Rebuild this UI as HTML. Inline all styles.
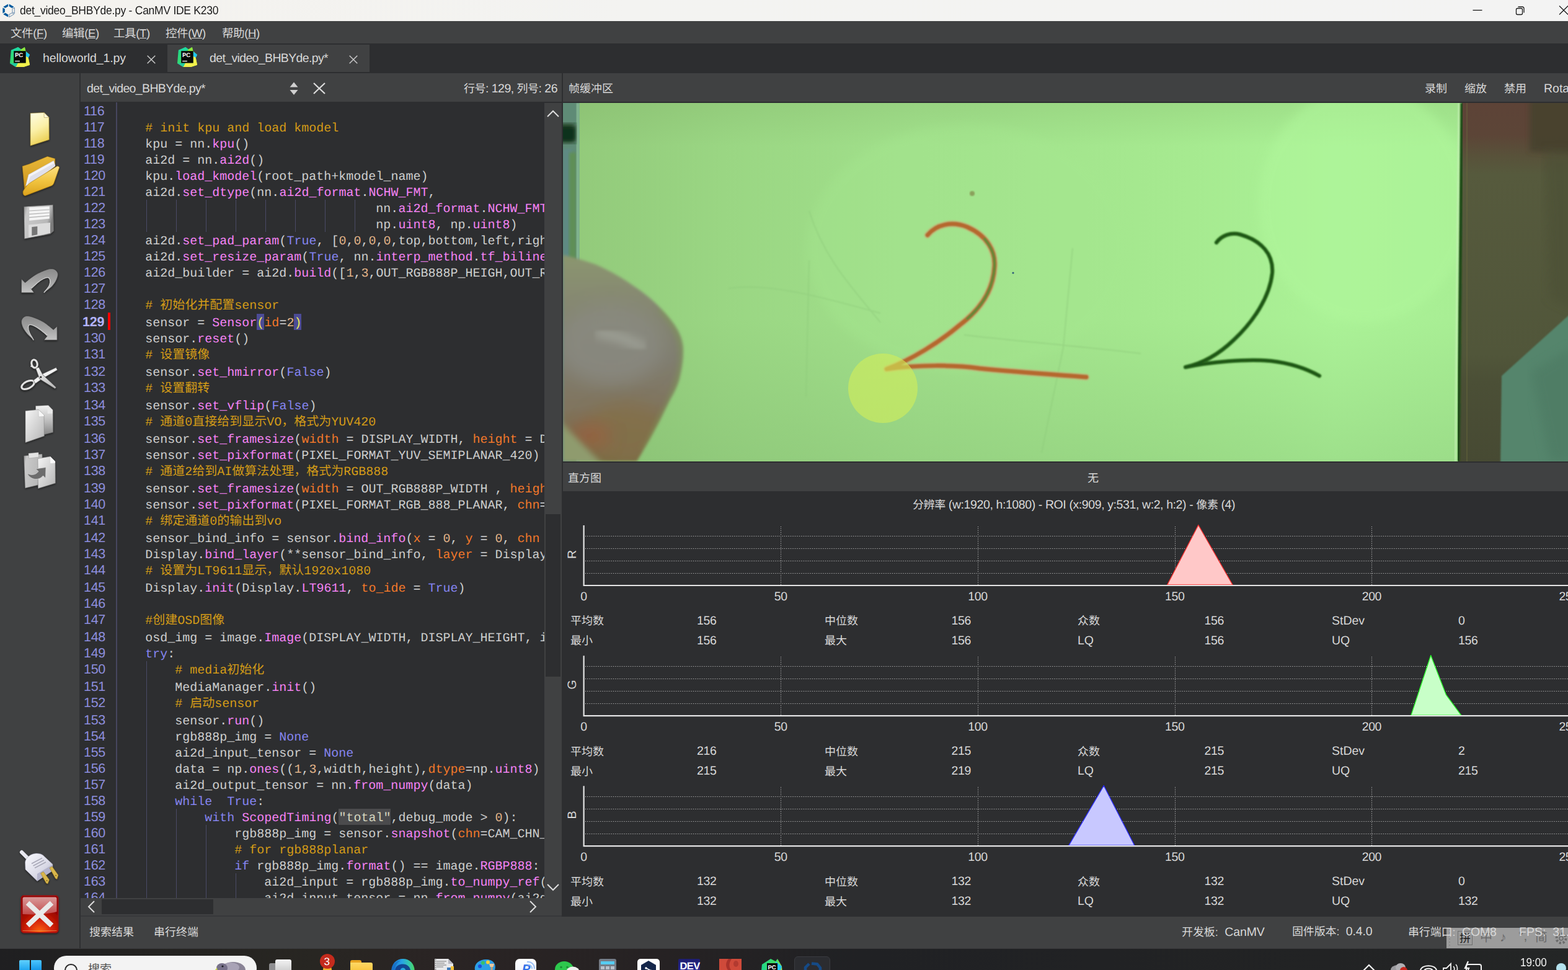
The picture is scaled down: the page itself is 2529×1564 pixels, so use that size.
<!DOCTYPE html>
<html lang="zh-CN"><head><meta charset="utf-8"><title>det_video_BHBYde.py - CanMV IDE K230</title>
<style>
html,body{margin:0;padding:0;}
body{text-rendering:geometricPrecision;width:2529px;height:1564px;overflow:hidden;position:relative;background:#2d2e30;font-family:"Liberation Sans","Noto Sans CJK SC",sans-serif;color:#d6d6d6;}
.a{position:absolute;}
.t{position:absolute;white-space:pre;line-height:1;}
.u{font-size:19.5px;color:#d8d8d8;}
.z{font-size:18px;}
svg{position:absolute;overflow:visible;}
/* code */
#code{position:absolute;left:129px;top:165px;width:749px;height:1283px;overflow:hidden;background:#2d2e30;}
.ln{position:absolute;left:0;width:749px;white-space:pre;font-family:"Liberation Mono","Noto Sans CJK SC",monospace;font-size:20px;color:#cecece;}
.ln i{font-style:normal;position:absolute;left:6px;top:0px;font-family:"Liberation Sans",sans-serif;font-size:21.5px;color:#8e8ede;letter-spacing:-0.3px;line-height:26px;}
.ln b{font-weight:normal;position:absolute;left:57.3px;top:2.8px;line-height:26px;}
.ph{display:inline-block;height:26px;margin-top:-3px;padding-top:3px;box-sizing:border-box;vertical-align:top;background:#4c4c96;color:#eeee55;}
.c{color:#d39b17;}
.m{color:#f583f5;}
.k{color:#8585f0;}
.g{color:#f2782a;}
.n{color:#e3b58a;}
.s{display:inline-block;height:26px;margin-top:-3px;padding-top:3px;box-sizing:border-box;vertical-align:top;color:#d6d6c0;background:#4b4b4d;}
.gd{position:absolute;width:1px;background:#4a4a66;}
</style></head><body>

<!-- title bar -->
<div class="a" style="left:0;top:0;width:2529px;height:34px;background:linear-gradient(90deg,#f4f2ee 0%,#f3f3f1 40%,#f3f3f3 100%)"></div>
<svg style="left:0;top:0" width="30" height="34" viewBox="0 0 30 34"><path d="M14.76 6.39 L22.57 10.90 L19.25 12.99 L14.61 10.31 Z M13.04 27.40 L5.23 22.89 L8.55 20.81 L13.19 23.49 Z M4.37 21.41 L4.37 12.39 L7.84 14.22 L7.84 19.58 Z M5.23 10.90 L13.04 6.39 L13.19 10.31 L8.55 12.99 Z" fill="#005a9e"/><path d="M23.43 12.39 L23.43 21.41 L19.96 19.58 L19.96 14.22 Z M22.57 22.89 L14.76 27.40 L14.61 23.49 L19.25 20.81 Z" fill="none" stroke="#7d9bb8" stroke-width="1.1" stroke-linejoin="round"/></svg>
<div class="t" id="ttl" style="left:32px;top:8px;font-size:19px;color:#1a1a1a;letter-spacing:-0.3px;transform-origin:0 0;transform:scaleX(0.922)">det_video_BHBYde.py - CanMV IDE K230</div>
<svg style="left:2375px;top:8px" width="154" height="20" viewBox="0 0 154 20"><g fill="none" stroke="#1b1b1b" stroke-width="1.3"><path d="M0.5 8.5 H15.5"/><rect x="70.5" y="5.5" width="10" height="10" rx="2"/><path d="M73.5 3 H80 a3 3 0 0 1 3 3 V12.5"/><path d="M140 1.5 L154 15.5 M154 1.5 L140 15.5"/></g></svg>

<!-- menu bar -->
<div class="a" style="left:0;top:34px;width:2529px;height:36px;background:#404142"></div>
<div class="t u" style="left:17px;top:44.5px;font-size:18.5px;letter-spacing:-0.4px">文件(<u>F</u>)</div>
<div class="t u" style="left:100px;top:44.5px;font-size:18.5px;letter-spacing:-0.4px">编辑(<u>E</u>)</div>
<div class="t u" style="left:183px;top:44.5px;font-size:18.5px;letter-spacing:-0.4px">工具(<u>T</u>)</div>
<div class="t u" style="left:267px;top:44.5px;font-size:18.5px;letter-spacing:-0.4px">控件(<u>W</u>)</div>
<div class="t u" style="left:358px;top:44.5px;font-size:18.5px;letter-spacing:-0.4px">帮助(<u>H</u>)</div>

<!-- tab bar -->
<div class="a" style="left:0;top:70px;width:2529px;height:48px;background:#2d2e30"></div>
<div class="a" style="left:270px;top:72px;width:326px;height:44px;background:#404142"></div>
<svg id="pc1" style="left:16px;top:76px" width="33" height="33" viewBox="0 0 33 33"><defs><linearGradient id="pcg" x1="0" y1="0.2" x2="1" y2="0.8"><stop offset="0" stop-color="#1fd78d"/><stop offset="0.45" stop-color="#3fdb62"/><stop offset="1" stop-color="#c8ee45"/></linearGradient></defs><path d="M1.8 5 L13.2 0 L18 3.4 L23.9 0 L25.5 6.4 L32.1 12.2 L29.7 17 L32.1 28.7 L22 32.1 L9.5 31.9 L0 26 Z" fill="url(#pcg)"/><path d="M13.2 0 L18 3.4 L10 8 L1.8 5 Z" fill="#1fd9a0"/><path d="M18 3.4 L23.9 0 L25.5 6.4 L25.7 12 L16 8 Z" fill="#8fe63c"/><path d="M25.5 7 L32.1 12.2 L29.7 17 L25.7 21 Z" fill="#1fc5f2"/><path d="M25.7 14.5 L29.7 17 L32.1 28.7 L22 32.1 L9.5 31.9 L13 25 L25.7 25.6 Z" fill="#f1f04b"/><path d="M9.5 31.9 L13 25.6 L6.2 25.6 L0 26 Z" fill="#22c9a0"/><rect x="6.2" y="6.2" width="19.5" height="19.4" fill="#080a06"/><path d="M8.2 22.6 H15.9" stroke="#d8d8d8" stroke-width="1.6"/><text x="7.9" y="15.9" font-family="Liberation Sans" font-weight="bold" font-size="9.7" fill="#f4f4f4" letter-spacing="-0.2">PC</text></svg>
<div class="t" id="tab1" style="left:69px;top:85px;font-size:19.5px;letter-spacing:-0.1px;color:#d8d8d8">helloworld_1.py</div>
<svg style="left:237px;top:89px" width="14" height="14" viewBox="0 0 14 14"><path d="M0.7 0.7 L13.3 13.3 M13.3 0.7 L0.7 13.3" stroke="#c8c8c8" stroke-width="1.5" fill="none"/></svg>
<svg id="pc2" style="left:286px;top:76px" width="33" height="33" viewBox="0 0 33 33"><path d="M1.8 5 L13.2 0 L18 3.4 L23.9 0 L25.5 6.4 L32.1 12.2 L29.7 17 L32.1 28.7 L22 32.1 L9.5 31.9 L0 26 Z" fill="url(#pcg)"/><path d="M13.2 0 L18 3.4 L10 8 L1.8 5 Z" fill="#1fd9a0"/><path d="M18 3.4 L23.9 0 L25.5 6.4 L25.7 12 L16 8 Z" fill="#8fe63c"/><path d="M25.5 7 L32.1 12.2 L29.7 17 L25.7 21 Z" fill="#1fc5f2"/><path d="M25.7 14.5 L29.7 17 L32.1 28.7 L22 32.1 L9.5 31.9 L13 25 L25.7 25.6 Z" fill="#f1f04b"/><path d="M9.5 31.9 L13 25.6 L6.2 25.6 L0 26 Z" fill="#22c9a0"/><rect x="6.2" y="6.2" width="19.5" height="19.4" fill="#080a06"/><path d="M8.2 22.6 H15.9" stroke="#d8d8d8" stroke-width="1.6"/><text x="7.9" y="15.9" font-family="Liberation Sans" font-weight="bold" font-size="9.7" fill="#f4f4f4" letter-spacing="-0.2">PC</text></svg>
<div class="t" id="tab2" style="left:338px;top:85px;font-size:19.5px;letter-spacing:-0.64px;color:#d8d8d8">det_video_BHBYde.py*</div>
<svg style="left:563px;top:89px" width="14" height="14" viewBox="0 0 14 14"><path d="M0.7 0.7 L13.3 13.3 M13.3 0.7 L0.7 13.3" stroke="#c8c8c8" stroke-width="1.5" fill="none"/></svg>

<!-- left toolbar -->
<div class="a" style="left:0;top:118px;width:128px;height:1412px;background:#404142"></div>
<div class="a" style="left:128px;top:118px;width:2px;height:1412px;background:#2f3032"></div>

<!-- editor header -->
<div class="a" style="left:130px;top:118px;width:776px;height:46px;background:#404142"></div>
<div class="t" id="edh" style="left:140px;top:133.5px;font-size:19.5px;letter-spacing:-0.64px;color:#d8d8d8">det_video_BHBYde.py*</div>
<svg style="left:467px;top:132px" width="14" height="22" viewBox="0 0 14 22"><path d="M7 0.5 L13.5 8.5 H0.5 Z M0.5 13 H13.5 L7 21 Z" fill="#d0d0d0"/></svg>
<svg style="left:505px;top:133px" width="20" height="19" viewBox="0 0 20 19"><path d="M1 1 L19 18 M19 1 L1 18" stroke="#dcdcdc" stroke-width="2.2" fill="none"/></svg>
<div class="t" id="rowcol" style="left:748px;top:133.5px;font-size:19.5px;color:#d8d8d8;letter-spacing:-0.52px"><span class="z">行号</span>: 129, <span class="z">列号</span>: 26</div>

<!-- splitter between editor and right panel -->
<div class="a" style="left:906px;top:118px;width:2px;height:1360px;background:#2d2e30"></div>

<!-- vertical scrollbar -->
<div class="a" style="left:878px;top:166px;width:28px;height:1282px;background:#404142"></div>
<div class="a" style="left:880px;top:829px;width:24px;height:262px;background:#2d2e30"></div>
<svg style="left:882px;top:177px" width="20" height="12" viewBox="0 0 20 12"><path d="M1 11 L10 2 L19 11" stroke="#dcdcdc" stroke-width="2" fill="none"/></svg>
<svg style="left:882px;top:1424.5px" width="20" height="12" viewBox="0 0 20 12"><path d="M1 1 L10 10 L19 1" stroke="#dcdcdc" stroke-width="2" fill="none"/></svg>
<!-- horizontal scrollbar -->
<div class="a" style="left:130px;top:1448px;width:776px;height:28px;background:#404142"></div>
<div class="a" style="left:164px;top:1450px;width:180px;height:24px;background:#2d2e30"></div>
<svg style="left:141px;top:1452px" width="12" height="20" viewBox="0 0 12 20"><path d="M11 1 L2 10 L11 19" stroke="#dcdcdc" stroke-width="2" fill="none"/></svg>
<svg style="left:854px;top:1452px" width="12" height="20" viewBox="0 0 12 20"><path d="M1 1 L10 10 L1 19" stroke="#dcdcdc" stroke-width="2" fill="none"/></svg>
<!-- toolbar icons -->
<svg id="tb" style="left:0;top:0" width="128" height="1530" viewBox="0 0 128 1530">
<defs>
<linearGradient id="gnew" x1="0" y1="0" x2="0.3" y2="1"><stop offset="0" stop-color="#fffde6"/><stop offset="0.55" stop-color="#fbf0a8"/><stop offset="1" stop-color="#ecd158"/></linearGradient>
<linearGradient id="gfold" x1="0" y1="0" x2="0" y2="1"><stop offset="0" stop-color="#fbe084"/><stop offset="0.5" stop-color="#f1c440"/><stop offset="1" stop-color="#dca21c"/></linearGradient>
<linearGradient id="gfoldb" x1="0" y1="0" x2="0" y2="1"><stop offset="0" stop-color="#e9b93a"/><stop offset="1" stop-color="#c98f18"/></linearGradient>
<linearGradient id="ggrey" x1="0" y1="0" x2="0" y2="1"><stop offset="0" stop-color="#f2f2f2"/><stop offset="0.5" stop-color="#bdbdbd"/><stop offset="1" stop-color="#7e7e7e"/></linearGradient>
<linearGradient id="garrow" x1="0" y1="0" x2="0" y2="1"><stop offset="0" stop-color="#8a8a8a"/><stop offset="0.5" stop-color="#a2a2a2"/><stop offset="1" stop-color="#c4c4c4"/></linearGradient>
<linearGradient id="ggrey2" x1="0" y1="0" x2="1" y2="1"><stop offset="0" stop-color="#f6f6f6"/><stop offset="1" stop-color="#b4b4b4"/></linearGradient>
<linearGradient id="gflop" x1="0" y1="0" x2="1" y2="0.3"><stop offset="0" stop-color="#8f8f8f"/><stop offset="0.15" stop-color="#c9c9c9"/><stop offset="0.85" stop-color="#b8b8b8"/><stop offset="1" stop-color="#7c7c7c"/></linearGradient>
<linearGradient id="gredt" x1="0" y1="0" x2="0" y2="1"><stop offset="0" stop-color="#d99a9a"/><stop offset="1" stop-color="#c24a4a"/></linearGradient>
<radialGradient id="gredb" cx="0.5" cy="1" r="0.75"><stop offset="0" stop-color="#ff6a10"/><stop offset="0.45" stop-color="#d42208"/><stop offset="1" stop-color="#8e0000"/></radialGradient>
<linearGradient id="gplug" x1="0" y1="0" x2="1" y2="1"><stop offset="0" stop-color="#fafaff"/><stop offset="0.6" stop-color="#d9d9e6"/><stop offset="1" stop-color="#a8a8be"/></linearGradient>
<filter id="sh" x="-20%" y="-20%" width="140%" height="150%"><feDropShadow dx="0" dy="1.5" stdDeviation="1.6" flood-color="#000" flood-opacity="0.55"/></filter>
</defs>
<!-- new -->
<g filter="url(#sh)"><path d="M49 182.5 L71 181.5 L79 189.5 L79.3 225.3 L49 235 Z" fill="url(#gnew)" stroke="#8c7424" stroke-width="0.6"/><path d="M71 181.5 L71.2 189.6 L79 189.5 Z" fill="#fff8d8" stroke="#a08838" stroke-width="0.5"/></g>
<!-- open -->
<g filter="url(#sh)"><path d="M36 268 L47 264.5 L76.5 252.2 L88.8 255.8 L88.8 268 L40 310 Z" fill="url(#gfoldb)" stroke="#8a6410" stroke-width="0.5"/><path d="M46 281.5 L86.6 259 L89 267 L41.5 300 Z" fill="#f4f4f8" stroke="#b8b8c4" stroke-width="0.5"/><path d="M49 284.5 L87.6 263 L89 268 L42.5 302 Z" fill="#e0e0ea"/><path d="M37.2 308.5 C42 300 46 296 51.7 292.7 L92 268 C94 267.5 95.8 268.8 95.6 270.4 L87 295 C86 297.5 85 298.5 83 299.5 L41 315.4 C38 316 36.6 312 37.2 308.5 Z" fill="url(#gfold)" stroke="#9a7010" stroke-width="0.6"/></g>
<!-- save -->
<g filter="url(#sh)"><path d="M38.7 333.2 L85.5 330.2 L86.6 372.5 L81 377.2 L39.4 385 Z" fill="url(#gflop)" stroke="#5a5a5a" stroke-width="0.6"/><path d="M47.2 334.4 L79.8 332.7 L79.8 352.4 L47.2 355.8 Z" fill="#f4f4f4"/><path d="M47.2 340 L79.8 338 M47.2 345.4 L79.8 343 M47.2 350.6 L79.8 347.8" stroke="#b0b0b0" stroke-width="1.2"/><path d="M46.1 362.5 L81 359 L81 376 L46.1 382.8 Z" fill="#dcdcdc"/><path d="M51.3 366 L60.3 365 L60.3 378.3 L51.3 380 Z" fill="#747474"/></g>
<!-- undo -->
<g filter="url(#sh)"><path d="M34.4 471.9 L34.4 449.6 L40.4 455.7 C43.2 453.6 51.1 446.7 57.0 443.2 C62.9 439.7 70.6 436.4 75.6 434.8 C80.5 433.2 83.8 433.0 86.7 433.9 C89.6 434.8 92.4 437.6 93.2 440.4 C94.0 443.2 92.8 447.1 91.3 450.6 C89.8 454.2 87.3 458.1 83.9 461.7 C80.5 465.2 73.1 470.2 70.9 471.9 C72.3 470.0 77.7 464.1 79.3 460.7 C80.9 457.3 81.2 453.7 80.7 451.5 C80.2 449.3 78.9 447.3 76.5 447.3 C74.1 447.3 69.5 449.6 66.3 451.5 C63.0 453.4 59.7 456.6 57.0 458.9 C54.3 461.2 51.2 464.3 50.1 465.4 L55 471.9 Z" fill="url(#garrow)" stroke="#3a3a3a" stroke-width="0.7"/><path d="M50.1 465.4 C51.2 464.3 54.3 461.2 57.0 458.9 C59.7 456.6 63.0 453.4 66.3 451.5 C69.5 449.6 74.1 447.3 76.5 447.3 C78.9 447.3 80.2 449.3 80.7 451.5 C81.2 453.7 80.9 457.3 79.3 460.7 C77.7 464.1 72.3 470.0 70.9 471.9" fill="none" stroke="#e6e6e6" stroke-width="1.3" opacity="0.85"/></g>
<!-- redo -->
<g filter="url(#sh)"><path d="M92.2 548.3 L92.2 526 L86.2 531.6 C83.5 529.5 75.6 522.5 70.0 519.1 C64.4 515.7 57.2 512.8 52.4 511.2 C47.6 509.6 44.2 509.0 41.3 509.8 C38.4 510.6 35.6 513.5 34.8 516.3 C33.9 519.1 34.8 523.0 36.2 526.5 C37.6 530.0 40.2 534.0 43.2 537.6 C46.2 541.2 52.4 546.5 54.3 548.3 C53.2 546.4 49.3 540.5 47.8 537.1 C46.3 533.7 45.4 530.2 45.5 527.9 C45.6 525.6 46.5 523.4 48.7 523.3 C50.9 523.2 55.5 525.5 58.9 527.4 C62.3 529.3 66.2 532.5 69.1 534.8 C72.0 537.1 75.3 540.2 76.5 541.3 L70.9 548.3 Z" fill="url(#garrow)" stroke="#3a3a3a" stroke-width="0.7"/><path d="M76.5 541.3 C75.3 540.2 72.0 537.1 69.1 534.8 C66.2 532.5 62.3 529.3 58.9 527.4 C55.5 525.5 50.9 523.2 48.7 523.3 C46.5 523.4 45.6 525.6 45.5 527.9 C45.4 530.2 46.3 533.7 47.8 537.1 C49.3 540.5 53.2 546.4 54.3 548.3" fill="none" stroke="#e6e6e6" stroke-width="1.3" opacity="0.85"/></g>
<!-- cut -->
<g filter="url(#sh)"><g fill="none" stroke="#3c3c3c" stroke-width="4.6"><ellipse cx="55.5" cy="586.5" rx="4.6" ry="6.6" transform="rotate(-14 55.5 586.5)"/><ellipse cx="45" cy="620.5" rx="11" ry="5.6" transform="rotate(-26 45 620.5)"/></g><g fill="none" stroke="#e4e4e4" stroke-width="3"><ellipse cx="55.5" cy="586.5" rx="4.6" ry="6.6" transform="rotate(-14 55.5 586.5)"/><ellipse cx="45" cy="620.5" rx="11" ry="5.6" transform="rotate(-26 45 620.5)"/></g><path d="M54 613 L66 604 L90.5 592.6 L92.6 596.6 L68 610.8 L57 618.6 Z" fill="#f2f2f2" stroke="#4a4a4a" stroke-width="0.7"/><path d="M57.6 594 L62.6 592.2 L69.2 604.4 L90.6 624.4 L88.8 626.8 L63.8 611 Z" fill="url(#ggrey2)" stroke="#4a4a4a" stroke-width="0.7"/><path d="M49.5 590 L53 591.5" stroke="#e4e4e4" stroke-width="2.4"/><circle cx="65.8" cy="608" r="1.5" fill="#1a1a1a"/></g>
<!-- copy -->
<g filter="url(#sh)"><path d="M57.5 654.5 L78 653.5 L85.2 661 L85.5 697 L57.5 704 Z" fill="url(#ggrey)" stroke="#6a6a6a" stroke-width="0.5"/><path d="M76.5 653.8 L76.8 667 L84.5 666.5 L84.8 661 Z" fill="#e9e9e9"/><path d="M41 662.5 L62 660.5 L71 669 L71.3 703 L41 713.5 Z" fill="url(#ggrey2)" stroke="#7a7a7a" stroke-width="0.5"/><path d="M62 660.5 L62.3 672 L71 671.5 L71 669 Z" fill="#f8f8f8" stroke="#a8a8a8" stroke-width="0.4"/></g>
<!-- paste -->
<g filter="url(#sh)"><path d="M38.5 735 L68 732 L70 780 L40.5 787 Z" fill="url(#gflop)" stroke="#5e5e5e" stroke-width="0.5"/><path d="M46 731 L62 729.5 L62.5 737 L46.5 739 Z" fill="#e4e4e4" stroke="#8a8a8a" stroke-width="0.4"/><path d="M61 739.5 L81 736 L89 744 L89.3 779 L61.5 787.5 Z" fill="url(#ggrey2)" stroke="#7a7a7a" stroke-width="0.5"/><path d="M81 736 L81.3 747 L89 746.5 L89 744 Z" fill="#fafafa"/><path d="M43.5 763 C50 767 58 766 62 760 L57.5 756 L74 753.5 L73.5 771 L69.5 767 C63 775 50 775 43.5 763 Z" fill="#6c6c6c" stroke="#d8d8d8" stroke-width="0.7"/></g>
<!-- plug -->
<g filter="url(#sh)"><path d="M35 1374 L48 1387" stroke="#e8e8f0" stroke-width="6" stroke-linecap="round"/><path d="M40.5 1390 C42 1382 50 1376.5 58 1376 C63 1375.8 67 1377 69.5 1379 L85 1393.5 L84.5 1404 L60 1420.5 L41 1402 Z" fill="url(#gplug)" stroke="#8c8ca0" stroke-width="0.5"/><path d="M60 1409 L84.8 1394 L84.5 1404 L60 1420.5 Z" fill="#b4b4cc"/><path d="M51 1392.5 L68 1383.5 M53.5 1396 L71 1386.8 M56 1399.5 L74 1390" stroke="#a9a9b8" stroke-width="1.6"/><path d="M65.5 1408 L70 1405.5 L79.5 1418.5 L77 1425 L74.5 1424 Z" fill="#d8b64c" stroke="#8a6c1c" stroke-width="0.5"/><path d="M80 1399.5 L84 1397 L94 1411 L92 1417.5 L89.5 1416.5 Z" fill="#d8b64c" stroke="#8a6c1c" stroke-width="0.5"/><circle cx="75.6" cy="1419.8" r="0.9" fill="#6a5010"/><circle cx="90.2" cy="1411.6" r="0.9" fill="#6a5010"/></g>
<!-- stop -->
<g filter="url(#sh)"><rect x="34.3" y="1444.3" width="59.5" height="59.5" rx="4" fill="url(#gredb)" stroke="#a30f0f" stroke-width="1.4"/><path d="M36.5 1449 a2.5 2.5 0 0 1 2.5 -2.5 H89 a2.5 2.5 0 0 1 2.5 2.5 V1470 C75 1474.5 55 1475 36.5 1474 Z" fill="url(#gredt)"/><path d="M36.6 1500.5 H91.4" stroke="#e8a060" stroke-width="0.8" opacity="0.8"/><path d="M47.5 1458.5 L80.5 1489.5 M80.5 1458.5 L47.5 1489.5" stroke="#e9e9e9" stroke-width="8.2" stroke-linecap="square"/></g>
</svg>
<div id="code">
<div class="ln" style="top:1px;height:26px"><i>116</i><b></b></div>
<div class="ln" style="top:27px;height:26px"><i>117</i><b>    <span class="c"># init kpu and load kmodel</span></b></div>
<div class="ln" style="top:53px;height:26px"><i>118</i><b>    kpu = nn.<span class="m">kpu</span>()</b></div>
<div class="ln" style="top:79px;height:26px"><i>119</i><b>    ai2d = nn.<span class="m">ai2d</span>()</b></div>
<div class="ln" style="top:105px;height:26px"><i>120</i><b>    kpu.<span class="m">load_kmodel</span>(root_path+kmodel_name)</b></div>
<div class="ln" style="top:131px;height:26px"><i>121</i><b>    ai2d.<span class="m">set_dtype</span>(nn.<span class="m">ai2d_format</span>.<span class="m">NCHW_FMT</span>,</b></div>
<div class="ln" style="top:157px;height:26px"><i>122</i><b>                                   nn.<span class="m">ai2d_format</span>.<span class="m">NCHW_FMT</span>,</b></div>
<div class="ln" style="top:183px;height:26px"><i>123</i><b>                                   np.<span class="m">uint8</span>, np.<span class="m">uint8</span>)</b></div>
<div class="ln" style="top:209px;height:26px"><i>124</i><b>    ai2d.<span class="m">set_pad_param</span>(<span class="k">True</span>, [<span class="n">0</span>,<span class="n">0</span>,<span class="n">0</span>,<span class="n">0</span>,top,bottom,left,right], <span class="n">0</span>, [<span class="n">114</span>,<span class="n">114</span>,<span class="n">114</span>])</b></div>
<div class="ln" style="top:235px;height:26px"><i>125</i><b>    ai2d.<span class="m">set_resize_param</span>(<span class="k">True</span>, nn.<span class="m">interp_method</span>.<span class="m">tf_bilinear</span>, nn.<span class="m">interp_mode</span>.<span class="m">half_pixel</span>)</b></div>
<div class="ln" style="top:261px;height:26px"><i>126</i><b>    ai2d_builder = ai2d.<span class="m">build</span>([<span class="n">1</span>,<span class="n">3</span>,OUT_RGB888P_HEIGH,OUT_RGB888P_WIDTH], [<span class="n">1</span>,<span class="n">3</span>,height,width])</b></div>
<div class="ln" style="top:287px;height:26px"><i>127</i><b></b></div>
<div class="ln" style="top:313px;height:28px"><i>128</i><b>    <span class="c"># 初始化并配置sensor</span></b></div>
<div class="ln" style="top:341px;height:26px"><i style="font-weight:bold;color:#b4b4ff;left:4px;letter-spacing:-0.2px">129</i><b>    sensor = <span class="m">Sensor</span><span class="ph">(</span><span class="g">id</span>=<span class="n">2</span><span class="ph">)</span></b></div>
<div class="ln" style="top:367px;height:26px"><i>130</i><b>    sensor.<span class="m">reset</span>()</b></div>
<div class="ln" style="top:393px;height:28px"><i>131</i><b>    <span class="c"># 设置镜像</span></b></div>
<div class="ln" style="top:421px;height:26px"><i>132</i><b>    sensor.<span class="m">set_hmirror</span>(<span class="k">False</span>)</b></div>
<div class="ln" style="top:447px;height:28px"><i>133</i><b>    <span class="c"># 设置翻转</span></b></div>
<div class="ln" style="top:475px;height:26px"><i>134</i><b>    sensor.<span class="m">set_vflip</span>(<span class="k">False</span>)</b></div>
<div class="ln" style="top:501px;height:28px"><i>135</i><b>    <span class="c"># 通道0直接给到显示VO，格式为YUV420</span></b></div>
<div class="ln" style="top:529px;height:26px"><i>136</i><b>    sensor.<span class="m">set_framesize</span>(<span class="g">width</span> = DISPLAY_WIDTH, <span class="g">height</span> = DISPLAY_HEIGHT)</b></div>
<div class="ln" style="top:555px;height:26px"><i>137</i><b>    sensor.<span class="m">set_pixformat</span>(PIXEL_FORMAT_YUV_SEMIPLANAR_420)</b></div>
<div class="ln" style="top:581px;height:28px"><i>138</i><b>    <span class="c"># 通道2给到AI做算法处理，格式为RGB888</span></b></div>
<div class="ln" style="top:609px;height:26px"><i>139</i><b>    sensor.<span class="m">set_framesize</span>(<span class="g">width</span> = OUT_RGB888P_WIDTH , <span class="g">height</span> = OUT_RGB888P_HEIGH, <span class="g">chn</span>=CAM_CHN_ID_2)</b></div>
<div class="ln" style="top:635px;height:26px"><i>140</i><b>    sensor.<span class="m">set_pixformat</span>(PIXEL_FORMAT_RGB_888_PLANAR, <span class="g">chn</span>=CAM_CHN_ID_2)</b></div>
<div class="ln" style="top:661px;height:28px"><i>141</i><b>    <span class="c"># 绑定通道0的输出到vo</span></b></div>
<div class="ln" style="top:689px;height:26px"><i>142</i><b>    sensor_bind_info = sensor.<span class="m">bind_info</span>(<span class="g">x</span> = <span class="n">0</span>, <span class="g">y</span> = <span class="n">0</span>, <span class="g">chn</span> = CAM_CHN_ID_0)</b></div>
<div class="ln" style="top:715px;height:26px"><i>143</i><b>    Display.<span class="m">bind_layer</span>(**sensor_bind_info, <span class="g">layer</span> = Display.<span class="m">LAYER_VIDEO1</span>)</b></div>
<div class="ln" style="top:741px;height:28px"><i>144</i><b>    <span class="c"># 设置为LT9611显示，默认1920x1080</span></b></div>
<div class="ln" style="top:769px;height:26px"><i>145</i><b>    Display.<span class="m">init</span>(Display.<span class="m">LT9611</span>, <span class="g">to_ide</span> = <span class="k">True</span>)</b></div>
<div class="ln" style="top:795px;height:26px"><i>146</i><b></b></div>
<div class="ln" style="top:821px;height:28px"><i>147</i><b>    <span class="c">#创建OSD图像</span></b></div>
<div class="ln" style="top:849px;height:26px"><i>148</i><b>    osd_img = image.<span class="m">Image</span>(DISPLAY_WIDTH, DISPLAY_HEIGHT, image.<span class="m">ARGB8888</span>)</b></div>
<div class="ln" style="top:875px;height:26px"><i>149</i><b>    <span class="k">try</span>:</b></div>
<div class="ln" style="top:901px;height:28px"><i>150</i><b>        <span class="c"># media初始化</span></b></div>
<div class="ln" style="top:929px;height:26px"><i>151</i><b>        MediaManager.<span class="m">init</span>()</b></div>
<div class="ln" style="top:955px;height:28px"><i>152</i><b>        <span class="c"># 启动sensor</span></b></div>
<div class="ln" style="top:983px;height:26px"><i>153</i><b>        sensor.<span class="m">run</span>()</b></div>
<div class="ln" style="top:1009px;height:26px"><i>154</i><b>        rgb888p_img = <span class="k">None</span></b></div>
<div class="ln" style="top:1035px;height:26px"><i>155</i><b>        ai2d_input_tensor = <span class="k">None</span></b></div>
<div class="ln" style="top:1061px;height:26px"><i>156</i><b>        data = np.<span class="m">ones</span>((<span class="n">1</span>,<span class="n">3</span>,width,height),<span class="g">dtype</span>=np.<span class="m">uint8</span>)</b></div>
<div class="ln" style="top:1087px;height:26px"><i>157</i><b>        ai2d_output_tensor = nn.<span class="m">from_numpy</span>(data)</b></div>
<div class="ln" style="top:1113px;height:26px"><i>158</i><b>        <span class="k">while</span>  <span class="k">True</span>:</b></div>
<div class="ln" style="top:1139px;height:26px"><i>159</i><b>            <span class="k">with</span> <span class="m">ScopedTiming</span>(<span class="s">"total"</span>,debug_mode &gt; <span class="n">0</span>):</b></div>
<div class="ln" style="top:1165px;height:26px"><i>160</i><b>                rgb888p_img = sensor.<span class="m">snapshot</span>(<span class="g">chn</span>=CAM_CHN_ID_2)</b></div>
<div class="ln" style="top:1191px;height:26px"><i>161</i><b>                <span class="c"># for rgb888planar</span></b></div>
<div class="ln" style="top:1217px;height:26px"><i>162</i><b>                <span class="k">if</span> rgb888p_img.<span class="m">format</span>() == image.<span class="m">RGBP888</span>:</b></div>
<div class="ln" style="top:1243px;height:26px"><i>163</i><b>                    ai2d_input = rgb888p_img.<span class="m">to_numpy_ref</span>()</b></div>
<div class="ln" style="top:1269px;height:26px"><i>164</i><b>                    ai2d_input_tensor = nn.<span class="m">from_numpy</span>(ai2d_input)</b></div>
<div class="gd" style="left:58px;top:0;height:1283px;width:2px;background:#46465e"></div>
<div class="a" style="left:45px;top:339px;width:4px;height:28px;background:#ff0000"></div>
<div class="gd" style="left:107px;top:157px;height:52px"></div>
<div class="gd" style="left:155px;top:157px;height:52px"></div>
<div class="gd" style="left:203px;top:157px;height:52px"></div>
<div class="gd" style="left:251px;top:157px;height:52px"></div>
<div class="gd" style="left:299px;top:157px;height:52px"></div>
<div class="gd" style="left:347px;top:157px;height:52px"></div>
<div class="gd" style="left:395px;top:157px;height:52px"></div>
<div class="gd" style="left:443px;top:157px;height:52px"></div>
<div class="gd" style="left:107px;top:901px;height:394px"></div>
<div class="gd" style="left:155px;top:1139px;height:156px"></div>
<div class="gd" style="left:203px;top:1165px;height:130px"></div>
<div class="gd" style="left:251px;top:1243px;height:52px"></div>
</div>
<!-- framebuffer header -->
<div class="a" style="left:908px;top:118px;width:1621px;height:46px;background:#404142"></div>
<div class="a" style="left:908px;top:164px;width:1621px;height:2px;background:#2d2e30"></div>
<div class="t u z" style="left:917px;top:134px">帧缓冲区</div>
<div class="t u z" style="left:2298px;top:134px">录制</div>
<div class="t u z" style="left:2362px;top:134px">缩放</div>
<div class="t u z" style="left:2426px;top:134px">禁用</div>
<div class="t u" style="left:2490px;top:133.5px">Rotate</div>

<!-- camera image -->
<svg id="cam" style="left:908px;top:166px" width="1621" height="578" viewBox="908 166 1621 578">
<defs>
<linearGradient id="gpaper" x1="908" y1="0" x2="2356" y2="0" gradientUnits="userSpaceOnUse">
<stop offset="0" stop-color="#92c97a"/><stop offset="0.18" stop-color="#9ad683"/><stop offset="0.4" stop-color="#a1e08b"/><stop offset="0.7" stop-color="#a6ea90"/><stop offset="0.86" stop-color="#abf297"/><stop offset="1" stop-color="#a8ee94"/>
</linearGradient>
<linearGradient id="gshade" x1="0" y1="166" x2="0" y2="744" gradientUnits="userSpaceOnUse">
<stop offset="0" stop-color="#7aa860" stop-opacity="0.22"/><stop offset="0.12" stop-color="#7aa860" stop-opacity="0"/><stop offset="0.6" stop-color="#6fa060" stop-opacity="0"/><stop offset="1" stop-color="#6fa060" stop-opacity="0.22"/>
</linearGradient>
<linearGradient id="gright" x1="0" y1="166" x2="0" y2="744" gradientUnits="userSpaceOnUse">
<stop offset="0" stop-color="#5d4337"/><stop offset="0.09" stop-color="#5c4537"/><stop offset="0.15" stop-color="#58523a"/><stop offset="0.2" stop-color="#565a3d"/><stop offset="0.7" stop-color="#51563a"/><stop offset="0.78" stop-color="#4b4f36"/><stop offset="1" stop-color="#474a33"/>
</linearGradient>
<linearGradient id="gfinger" x1="0" y1="411" x2="0" y2="744" gradientUnits="userSpaceOnUse">
<stop offset="0" stop-color="#8b966e"/><stop offset="0.2" stop-color="#878a72"/><stop offset="0.5" stop-color="#807e70"/><stop offset="0.75" stop-color="#80745e"/><stop offset="1" stop-color="#766a42"/>
</linearGradient>
<filter id="b2"><feGaussianBlur stdDeviation="2"/></filter>
<filter id="b1"><feGaussianBlur stdDeviation="1"/></filter>
<filter id="b4"><feGaussianBlur stdDeviation="4"/></filter>
<filter id="b8"><feGaussianBlur stdDeviation="8"/></filter>
<filter id="b14" x="-50%" y="-50%" width="200%" height="200%"><feGaussianBlur stdDeviation="14"/></filter>
<clipPath id="fclip"><path d="M908 411 C930 416 945 421 961 426.5 C985 437 1005 449 1022 461 C1040 473 1054 485 1066 497.5 C1078 510 1087 521 1093 532 C1099 543 1102 554 1102 566 C1102 582 1099 598 1095.5 612.5 C1092 624 1087 634 1081 644 L1064 678.5 L1047 710 L1027 744 L908 744 Z"/></clipPath>
<clipPath id="camclip"><rect x="908" y="166" width="1621" height="578"/></clipPath>
</defs>
<g clip-path="url(#camclip)">
<rect x="908" y="166" width="1621" height="578" fill="url(#gpaper)"/>
<rect x="908" y="166" width="1450" height="578" fill="url(#gshade)"/>
<!-- brighter region around upper right of paper -->
<ellipse cx="2200" cy="330" rx="170" ry="190" fill="#b0f79b" opacity="0.55" filter="url(#b8)"/>
<ellipse cx="1560" cy="400" rx="260" ry="200" fill="#a6e890" opacity="0.35" filter="url(#b8)"/>
<!-- left strip -->
<rect x="908" y="166" width="26.5" height="578" fill="#5f8b76"/><rect x="908" y="240" width="14" height="504" fill="#5f8a84" filter="url(#b2)"/>
<rect x="918" y="246" width="11" height="498" fill="#5f9052" opacity="0.9" filter="url(#b2)"/>
<rect x="929.5" y="166" width="5" height="578" fill="#8fc49a" opacity="0.75" filter="url(#b1)"/>
<rect x="900" y="200" width="28" height="30" fill="#123319" filter="url(#b4)"/><rect x="900" y="206" width="26" height="20" fill="#10301a" filter="url(#b2)"/>
<!-- right background -->
<path d="M2358 166 L2529 166 L2529 744 L2352 744 Z" fill="url(#gright)"/>
<path d="M2467 160 L2540 160 L2540 250 L2467 244 Z" fill="#47432f" opacity="0.9" filter="url(#b4)"/><path d="M2490 244 L2540 244 L2540 500 L2500 480 Z" fill="#4c5036" opacity="0.6" filter="url(#b8)"/>
<path d="M2535 504 L2422 606 L2420 750 L2535 750 Z" fill="#55856c" filter="url(#b1)"/>
<path d="M2470 600 L2500 744 L2535 744 L2535 560 Z" fill="#4d7a64" opacity="0.7" filter="url(#b8)"/><path d="M2366 166 L2366 744" stroke="#6a6a3c" stroke-width="1.5" opacity="0.6"/>
<path d="M2358 166 L2352 744" stroke="#1f4a16" stroke-width="5" fill="none" filter="url(#b1)"/>
<path d="M2353 166 L2347 744" stroke="#c9f0b8" stroke-width="3" fill="none" opacity="0.7" filter="url(#b1)"/>
<!-- finger -->
<g filter="url(#b2)">
<path d="M908 411 C930 416 945 421 961 426.5 C985 437 1005 449 1022 461 C1040 473 1054 485 1066 497.5 C1078 510 1087 521 1093 532 C1099 543 1102 554 1102 566 C1102 582 1099 598 1095.5 612.5 C1092 624 1087 634 1081 644 L1064 678.5 L1047 710 L1027 744 L908 744 Z" fill="url(#gfinger)"/>
<g clip-path="url(#fclip)">
<ellipse cx="985" cy="555" rx="85" ry="65" fill="#8a8a82" opacity="0.75" filter="url(#b14)"/>
<ellipse cx="1010" cy="700" rx="70" ry="50" fill="#84704a" opacity="0.8" filter="url(#b14)"/>
<ellipse cx="950" cy="702" rx="34" ry="20" fill="#a05a3a" opacity="0.6" filter="url(#b14)"/>
<path d="M900 676 L975 752 L900 752 Z" fill="#8f9b6e" filter="url(#b4)"/>
<path d="M1066 497 C1092 525 1104 550 1101 580 C1098 610 1086 640 1064 680 L1040 730" stroke="#7f9658" stroke-width="10" fill="none" opacity="0.7" filter="url(#b4)"/>
<path d="M966 536 C990 540 1015 548 1036 560" stroke="#b0b6ac" stroke-width="14" stroke-linecap="round" fill="none" opacity="0.6" filter="url(#b8)"/>
</g>
</g>
<!-- faint marks on paper -->
<g stroke="#8fcb7c" stroke-width="2" fill="none" opacity="0.55" filter="url(#b1)"><path d="M1175 465 C1240 455 1330 480 1420 505"/><path d="M1305 340 C1330 420 1380 470 1420 520"/><path d="M1305 420 L1300 640"/><path d="M1555 540 C1640 550 1760 560 1840 570"/><path d="M1730 400 L1715 560 L1680 730"/></g>
<!-- small dots -->
<circle cx="1568" cy="312" r="4" fill="#8aa05c" filter="url(#b1)"/>
<circle cx="1634" cy="440" r="1.6" fill="#2c5a78"/>
<!-- red 2 -->
<g fill="none" stroke-linecap="round" stroke-linejoin="round" filter="url(#b1)">
<path d="M1496 379 C1510 362 1535 356 1560 366 C1592 380 1606 405 1604 430 C1602 470 1580 500 1548 524 C1515 552 1470 580 1430 595 C1480 588 1540 588 1580 594 C1640 600 1700 604 1752 608" stroke="#d6a070" stroke-width="11" opacity="0.5"/>
<path d="M1496 379 C1510 362 1535 356 1560 366 C1592 380 1606 405 1604 430 C1602 470 1580 500 1548 524 C1515 552 1470 580 1430 595 C1480 588 1540 588 1580 594 C1640 600 1700 604 1752 608" stroke="#b5682e" stroke-width="7"/>
<path d="M1588 385 C1604 405 1606 420 1603 440 C1598 470 1585 492 1560 514" stroke="#4f8f3a" stroke-width="4" opacity="0.85"/>
</g>
<!-- dark 2 -->
<g fill="none" stroke-linecap="round" stroke-linejoin="round" filter="url(#b1)">
<path d="M1962 391 C1970 380 1985 374 2000 378 C2035 388 2054 410 2052 440 C2048 480 2020 520 1990 548 C1965 572 1940 586 1912 592 C1950 584 2010 578 2050 582 C2085 586 2110 596 2128 606" stroke="#2f6f22" stroke-width="6.5"/>
<path d="M1962 391 C1970 380 1985 374 2000 378 C2035 388 2054 410 2052 440 C2048 480 2020 520 1990 548 C1965 572 1940 586 1912 592 C1950 584 2010 578 2050 582 C2085 586 2110 596 2128 606" stroke="#1f5317" stroke-width="3.5"/>
</g>
<!-- yellow cursor circle -->
<circle cx="1424" cy="626" r="56" fill="#d4ee58" opacity="0.6"/>
</g>
</svg>
<!-- histogram header -->
<div class="a" style="left:908px;top:744px;width:1621px;height:2px;background:#2d2e30"></div>
<div class="a" style="left:908px;top:746px;width:1621px;height:46px;background:#404142"></div>
<div class="t u z" style="left:916px;top:762px">直方图</div>
<div class="t u z" style="left:1754px;top:762px">无</div>
<div class="t u" id="htitle" style="left:1472px;top:805px;letter-spacing:-0.4px"><span class="z">分辨率</span> (w:1920, h:1080) - ROI (x:909, y:531, w:2, h:2) - <span class="z">像素</span> (4)</div>
<svg style="left:0;top:0" width="2529" height="1564" viewBox="0 0 2529 1564"><g stroke="#c8c8c8" stroke-width="1" stroke-dasharray="1 2" fill="none" shape-rendering="crispEdges"><path d="M944 924.5 H2529"/><path d="M944 904.5 H2529"/><path d="M944 884.5 H2529"/><path d="M944 864.5 H2529"/><path d="M1259.5 849.0 V943.0"/><path d="M1577.5 849.0 V943.0"/><path d="M1895.5 849.0 V943.0"/><path d="M2212.5 849.0 V943.0"/><path d="M2530.5 849.0 V943.0"/></g><polygon points="1882.6,943.0 1932.8,846.5 1988.1,943.0" fill="#ffc8c8" stroke="#ff2a2a" stroke-width="1.3" stroke-linejoin="round"/><path d="M941.6 847.0 V944.0 H2529" stroke="#e4e4e4" stroke-width="2.2" fill="none"/></svg>
<div class="t u" style="left:914px;top:884px;width:20px;height:20px;transform:rotate(-90deg);text-align:center">R</div>
<div class="t u" style="left:911.6px;top:953px;width:60px;text-align:center;letter-spacing:-0.4px">0</div>
<div class="t u" style="left:1229.3px;top:953px;width:60px;text-align:center;letter-spacing:-0.4px">50</div>
<div class="t u" style="left:1547.0px;top:953px;width:60px;text-align:center;letter-spacing:-0.4px">100</div>
<div class="t u" style="left:1864.7px;top:953px;width:60px;text-align:center;letter-spacing:-0.4px">150</div>
<div class="t u" style="left:2182.4px;top:953px;width:60px;text-align:center;letter-spacing:-0.4px">200</div>
<div class="t u" style="left:2500.1px;top:953px;width:60px;text-align:center;letter-spacing:-0.4px">250</div>
<div class="t u z" style="left:920px;top:992.3px">平均数</div>
<div class="t u" style="left:1124.0px;top:991.5px;letter-spacing:-0.4px">156</div>
<div class="t u z" style="left:920px;top:1024.3px">最小</div>
<div class="t u" style="left:1124.0px;top:1023.5px;letter-spacing:-0.4px">156</div>
<div class="t u z" style="left:1330px;top:992.3px">中位数</div>
<div class="t u" style="left:1534.5px;top:991.5px;letter-spacing:-0.4px">156</div>
<div class="t u z" style="left:1330px;top:1024.3px">最大</div>
<div class="t u" style="left:1534.5px;top:1023.5px;letter-spacing:-0.4px">156</div>
<div class="t u z" style="left:1738px;top:992.3px">众数</div>
<div class="t u" style="left:1942.5px;top:991.5px;letter-spacing:-0.4px">156</div>
<div class="t u" style="left:1738px;top:1023.5px">LQ</div>
<div class="t u" style="left:1942.5px;top:1023.5px;letter-spacing:-0.4px">156</div>
<div class="t u" style="left:2148px;top:991.5px">StDev</div>
<div class="t u" style="left:2352.0px;top:991.5px;letter-spacing:-0.4px">0</div>
<div class="t u" style="left:2148px;top:1023.5px">UQ</div>
<div class="t u" style="left:2352.0px;top:1023.5px;letter-spacing:-0.4px">156</div>
<svg style="left:0;top:0" width="2529" height="1564" viewBox="0 0 2529 1564"><g stroke="#c8c8c8" stroke-width="1" stroke-dasharray="1 2" fill="none" shape-rendering="crispEdges"><path d="M944 1134.5 H2529"/><path d="M944 1114.5 H2529"/><path d="M944 1094.5 H2529"/><path d="M944 1074.5 H2529"/><path d="M1259.5 1059.2 V1153.2"/><path d="M1577.5 1059.2 V1153.2"/><path d="M1895.5 1059.2 V1153.2"/><path d="M2212.5 1059.2 V1153.2"/><path d="M2530.5 1059.2 V1153.2"/></g><polygon points="2275.9,1153.2 2307.7,1056.7 2332.5,1120.4 2356.6,1153.2" fill="#c8ffc8" stroke="#2aff2a" stroke-width="1.3" stroke-linejoin="round"/><path d="M941.6 1057.2 V1154.2 H2529" stroke="#e4e4e4" stroke-width="2.2" fill="none"/></svg>
<div class="t u" style="left:914px;top:1094px;width:20px;height:20px;transform:rotate(-90deg);text-align:center">G</div>
<div class="t u" style="left:911.6px;top:1163px;width:60px;text-align:center;letter-spacing:-0.4px">0</div>
<div class="t u" style="left:1229.3px;top:1163px;width:60px;text-align:center;letter-spacing:-0.4px">50</div>
<div class="t u" style="left:1547.0px;top:1163px;width:60px;text-align:center;letter-spacing:-0.4px">100</div>
<div class="t u" style="left:1864.7px;top:1163px;width:60px;text-align:center;letter-spacing:-0.4px">150</div>
<div class="t u" style="left:2182.4px;top:1163px;width:60px;text-align:center;letter-spacing:-0.4px">200</div>
<div class="t u" style="left:2500.1px;top:1163px;width:60px;text-align:center;letter-spacing:-0.4px">250</div>
<div class="t u z" style="left:920px;top:1202.5px">平均数</div>
<div class="t u" style="left:1124.0px;top:1201.7px;letter-spacing:-0.4px">216</div>
<div class="t u z" style="left:920px;top:1234.5px">最小</div>
<div class="t u" style="left:1124.0px;top:1233.7px;letter-spacing:-0.4px">215</div>
<div class="t u z" style="left:1330px;top:1202.5px">中位数</div>
<div class="t u" style="left:1534.5px;top:1201.7px;letter-spacing:-0.4px">215</div>
<div class="t u z" style="left:1330px;top:1234.5px">最大</div>
<div class="t u" style="left:1534.5px;top:1233.7px;letter-spacing:-0.4px">219</div>
<div class="t u z" style="left:1738px;top:1202.5px">众数</div>
<div class="t u" style="left:1942.5px;top:1201.7px;letter-spacing:-0.4px">215</div>
<div class="t u" style="left:1738px;top:1233.7px">LQ</div>
<div class="t u" style="left:1942.5px;top:1233.7px;letter-spacing:-0.4px">215</div>
<div class="t u" style="left:2148px;top:1201.7px">StDev</div>
<div class="t u" style="left:2352.0px;top:1201.7px;letter-spacing:-0.4px">2</div>
<div class="t u" style="left:2148px;top:1233.7px">UQ</div>
<div class="t u" style="left:2352.0px;top:1233.7px;letter-spacing:-0.4px">215</div>
<svg style="left:0;top:0" width="2529" height="1564" viewBox="0 0 2529 1564"><g stroke="#c8c8c8" stroke-width="1" stroke-dasharray="1 2" fill="none" shape-rendering="crispEdges"><path d="M944 1344.5 H2529"/><path d="M944 1324.5 H2529"/><path d="M944 1304.5 H2529"/><path d="M944 1284.5 H2529"/><path d="M1259.5 1269.2 V1363.2"/><path d="M1577.5 1269.2 V1363.2"/><path d="M1895.5 1269.2 V1363.2"/><path d="M2212.5 1269.2 V1363.2"/><path d="M2530.5 1269.2 V1363.2"/></g><polygon points="1723.8,1363.2 1780.3,1266.7 1829.9,1363.2" fill="#c8c8ff" stroke="#2a2aff" stroke-width="1.3" stroke-linejoin="round"/><path d="M941.6 1267.2 V1364.2 H2529" stroke="#e4e4e4" stroke-width="2.2" fill="none"/></svg>
<div class="t u" style="left:914px;top:1304px;width:20px;height:20px;transform:rotate(-90deg);text-align:center">B</div>
<div class="t u" style="left:911.6px;top:1373px;width:60px;text-align:center;letter-spacing:-0.4px">0</div>
<div class="t u" style="left:1229.3px;top:1373px;width:60px;text-align:center;letter-spacing:-0.4px">50</div>
<div class="t u" style="left:1547.0px;top:1373px;width:60px;text-align:center;letter-spacing:-0.4px">100</div>
<div class="t u" style="left:1864.7px;top:1373px;width:60px;text-align:center;letter-spacing:-0.4px">150</div>
<div class="t u" style="left:2182.4px;top:1373px;width:60px;text-align:center;letter-spacing:-0.4px">200</div>
<div class="t u" style="left:2500.1px;top:1373px;width:60px;text-align:center;letter-spacing:-0.4px">250</div>
<div class="t u z" style="left:920px;top:1412.5px">平均数</div>
<div class="t u" style="left:1124.0px;top:1411.7px;letter-spacing:-0.4px">132</div>
<div class="t u z" style="left:920px;top:1444.5px">最小</div>
<div class="t u" style="left:1124.0px;top:1443.7px;letter-spacing:-0.4px">132</div>
<div class="t u z" style="left:1330px;top:1412.5px">中位数</div>
<div class="t u" style="left:1534.5px;top:1411.7px;letter-spacing:-0.4px">132</div>
<div class="t u z" style="left:1330px;top:1444.5px">最大</div>
<div class="t u" style="left:1534.5px;top:1443.7px;letter-spacing:-0.4px">132</div>
<div class="t u z" style="left:1738px;top:1412.5px">众数</div>
<div class="t u" style="left:1942.5px;top:1411.7px;letter-spacing:-0.4px">132</div>
<div class="t u" style="left:1738px;top:1443.7px">LQ</div>
<div class="t u" style="left:1942.5px;top:1443.7px;letter-spacing:-0.4px">132</div>
<div class="t u" style="left:2148px;top:1411.7px">StDev</div>
<div class="t u" style="left:2352.0px;top:1411.7px;letter-spacing:-0.4px">0</div>
<div class="t u" style="left:2148px;top:1443.7px">UQ</div>
<div class="t u" style="left:2352.0px;top:1443.7px;letter-spacing:-0.4px">132</div>
<!-- status bar -->
<div class="a" style="left:130px;top:1476px;width:776px;height:2px;background:#37383a"></div>
<div class="a" style="left:130px;top:1478px;width:2399px;height:52px;background:#404142"></div>
<!-- IME overlay -->
<div class="a" style="left:2333px;top:1496px;width:196px;height:33px;background:#9c9c9c"></div>
<div class="a" style="left:2337px;top:1498px;width:2px;height:30px;background:repeating-linear-gradient(180deg,#8a8a8a 0 2px,transparent 2px 5px)"></div>
<div class="a" style="left:2351px;top:1501px;width:24px;height:23px;border:1.5px solid #6e6e6e;box-sizing:border-box"></div>
<div class="t" style="left:2354px;top:1503.5px;font-size:18px;color:#1c1c1c">拼</div>
<div class="t" style="left:2387px;top:1502px;font-size:20px;color:#6a6a6a">中</div>
<div class="t" style="left:2419px;top:1501px;font-size:21px;color:#6a6a6a">♪</div>
<div class="t" style="left:2449px;top:1499px;font-size:21px;color:#6a6a6a">°,</div>
<div class="t" style="left:2476px;top:1502px;font-size:20px;color:#6a6a6a">简</div>
<svg style="left:2506px;top:1501px" width="24" height="24" viewBox="0 0 24 24"><circle cx="12" cy="12" r="7.5" fill="none" stroke="#6c6c6c" stroke-width="4" stroke-dasharray="3.2 2.7"/><circle cx="12" cy="12" r="3" fill="none" stroke="#6c6c6c" stroke-width="1.5"/></svg>
<div class="t u z" style="left:144px;top:1493.5px">搜索结果</div>
<div class="t u z" style="left:248px;top:1493.5px">串行终端</div>
<div class="t u" id="sb1" style="left:1906px;top:1494px;letter-spacing:-0.1px"><span class="z">开发板:</span>  CanMV</div>
<div class="t u" id="sb2" style="left:2084px;top:1493px;letter-spacing:-0.15px"><span class="z">固件版本:</span>  0.4.0</div>
<div class="t u" id="sb3" style="left:2271px;top:1494px;letter-spacing:-0.13px"><span class="z">串行端口:</span>  COM8</div>
<div class="t u" id="sb4" style="left:2450px;top:1494px">FPS:  31.</div>
<!-- taskbar -->
<div class="a" style="left:0;top:1530px;width:2529px;height:34px;background:linear-gradient(90deg,#1f1f21 0%,#242321 10%,#282622 20%,#2a2424 28%,#262223 42%,#202124 55%,#222324 85%,#242626 100%)"></div>
<div class="a" style="left:0;top:1529px;width:2529px;height:1px;background:#38383a"></div>
<!-- start -->
<div class="a" style="left:31px;top:1548px;width:17px;height:16px;background:linear-gradient(180deg,#5fd0ff,#22a7f0);border-radius:2px 0 0 0"></div>
<div class="a" style="left:50px;top:1548px;width:17px;height:16px;background:linear-gradient(180deg,#4cc6ff,#1697e8);border-radius:0 2px 0 0"></div>
<!-- search box -->
<div class="a" style="left:87px;top:1541px;width:327px;height:40px;background:#f3f3f3;border-radius:20px"></div>
<div class="a" style="left:104px;top:1554px;width:17px;height:17px;border:2.5px solid #2a2a2a;border-radius:50%;box-sizing:content-box"></div>
<div class="t" style="left:142px;top:1554px;font-size:19px;color:#555">搜索</div>
<svg style="left:346px;top:1548px" width="52" height="18" viewBox="0 0 52 18"><ellipse cx="30" cy="16" rx="20" ry="13" fill="#8a8496"/><ellipse cx="26" cy="12" rx="14" ry="8" fill="#a9a3b6"/><ellipse cx="12" cy="13" rx="9" ry="8" fill="#77718a"/><circle cx="13" cy="10" r="1.6" fill="#1c1c24"/><path d="M1 16 L4 12 L5 18 Z" fill="#c8d448"/></svg>
<!-- task view -->
<div class="a" style="left:434px;top:1553px;width:24px;height:14px;background:#8f8f91;border-radius:3px 3px 0 0"></div>
<div class="a" style="left:444px;top:1547px;width:26px;height:18px;background:linear-gradient(180deg,#f4f4f4,#d0d0d0);border-radius:3px 3px 0 0"></div>
<!-- widget w/ badge -->
<div class="a" style="left:521px;top:1556px;width:14px;height:10px;background:#f0b429;border-radius:7px 7px 0 0"></div>
<div class="a" style="left:516px;top:1538px;width:24px;height:24px;border-radius:50%;background:#c42b1c"></div>
<div class="t" style="left:522.5px;top:1541.5px;font-size:17px;color:#fff">3</div>
<!-- explorer -->
<div class="a" style="left:565px;top:1548px;width:18px;height:6px;background:#e8a421;border-radius:3px 3px 0 0"></div>
<div class="a" style="left:565px;top:1552px;width:36px;height:14px;background:linear-gradient(180deg,#ffd866,#f7c53d);border-radius:0 3px 0 0"></div>
<!-- edge -->
<svg style="left:631px;top:1545px" width="38" height="19" viewBox="0 0 38 19"><defs><linearGradient id="edg" x1="0" y1="0" x2="1" y2="0"><stop offset="0" stop-color="#1976d2"/><stop offset="0.45" stop-color="#27a3e6"/><stop offset="0.75" stop-color="#34c6b0"/><stop offset="1" stop-color="#4ad461"/></linearGradient></defs><circle cx="19" cy="19.5" r="18.6" fill="url(#edg)"/><path d="M6 22 C6 12 13 9.5 19 9.5 C26 9.5 30 14 31 19 L24 21 C23 17 21 15.5 19 15.5 C16 15.5 14 18 14.5 22 Z" fill="#0f3a8a" opacity="0.9"/><path d="M0.5 19.5 C1 10 8 4 16 3.5 C10 6 6 12 6 19.5 Z" fill="#1565c0" opacity="0.6"/></svg>
<!-- notepad-like doc -->
<svg style="left:701px;top:1546px" width="32" height="18" viewBox="0 0 32 18"><path d="M0 0 H22 L30 8 V18 H0 Z" fill="#e8e8ea"/><path d="M22 0 V8 H30 Z" fill="#b8b8c0"/><g stroke="#777" stroke-width="1"><path d="M3 4 H19 M3 7 H16 M3 10 H19 M3 13 H14"/></g><path d="M1.5 1 V18" stroke="#555" stroke-width="1.5" stroke-dasharray="1.5 1.5"/><path d="M20 14 h10 v4 h-10z" fill="#3b78b8"/><path d="M26 12 h5 v6 h-5z" fill="#f2c037"/></svg>
<!-- paint -->
<svg style="left:765px;top:1546px" width="36" height="18" viewBox="0 0 36 18"><path d="M1 18 C-1 8 8 1 19 1 C30 1 36 8 33 18 Z" fill="#2b9fe6"/><circle cx="9" cy="12" r="3" fill="#1d4ed8"/><circle cx="14" cy="6.5" r="3" fill="#35c26b"/><circle cx="22" cy="5.5" r="3" fill="#f5d03a"/><circle cx="29" cy="10" r="2.6" fill="#e5533d"/><path d="M24 8 h8 l-1.5 5 h-5z" fill="#e8c9a0"/><rect x="26.6" y="13" width="3" height="5" fill="#c9a070"/></svg>
<!-- P app -->
<div class="a" style="left:831px;top:1546px;width:34px;height:24px;background:linear-gradient(180deg,#ffffff,#eef2fb);border-radius:7px 7px 0 0"></div>
<div class="t" style="left:842px;top:1553px;font-size:20px;font-weight:bold;font-style:italic;color:#2f6fe8">P</div>
<svg style="left:848px;top:1549px" width="16" height="15" viewBox="0 0 16 15"><path d="M2 2 C9 1 14 6 14 13" stroke="#9cc0f5" stroke-width="2.2" fill="none"/><path d="M3 6.5 C7 6 10 9 10 13" stroke="#9cc0f5" stroke-width="2" fill="none"/></svg>
<!-- wechat -->
<svg style="left:895px;top:1549px" width="40" height="16" viewBox="0 0 40 16"><ellipse cx="15" cy="14" rx="15" ry="13" fill="#2dc84d"/><circle cx="10" cy="10.5" r="1.8" fill="#1e8f36"/><circle cx="20" cy="10.5" r="1.8" fill="#1e8f36"/><ellipse cx="29" cy="19" rx="11" ry="9.5" fill="#ededed"/></svg>
<!-- calculator -->
<div class="a" style="left:966px;top:1546px;width:28px;height:22px;background:#757c87;border-radius:3px 3px 0 0"></div>
<div class="a" style="left:969px;top:1550px;width:22px;height:5px;background:#56ccf2"></div>
<div class="a" style="left:969px;top:1558px;width:6px;height:5px;background:#b9c0ca;box-shadow:8px 0 0 #b9c0ca,16px 0 0 #b9c0ca"></div>
<!-- hex app -->
<div class="a" style="left:1028px;top:1546px;width:36px;height:24px;background:#fdfdfd;border-radius:5px 5px 0 0"></div>
<svg style="left:1033px;top:1548px" width="26" height="16" viewBox="0 0 26 16"><path d="M13 1 L25 8 V22 L13 29 L1 22 V8 Z" fill="#14264a"/><path d="M9 13 L17 17" stroke="#fff" stroke-width="1.5"/><circle cx="9" cy="13" r="1.8" fill="#fff"/><circle cx="17" cy="17" r="1.4" fill="#fff"/></svg>
<!-- DEV -->
<div class="a" style="left:1094px;top:1546px;width:35px;height:22px;background:linear-gradient(180deg,#1d1d6e,#28289a);border-radius:2px 2px 0 0"></div>
<div class="t" style="left:1096.5px;top:1550px;font-size:16.5px;font-weight:bold;color:#fff;letter-spacing:-0.6px">DEV</div>
<!-- red app -->
<div class="a" style="left:1160px;top:1546px;width:36px;height:22px;background:#cf4a3a"></div>
<svg style="left:1160px;top:1546px" width="36" height="18" viewBox="0 0 36 18"><path d="M15 0 C10 6 10 12 14 18 L19 18 C15 12 16 6 20 0 Z" fill="#a8322a"/><ellipse cx="27" cy="8" rx="4" ry="5" fill="#b23a30"/></svg>
<!-- pycharm -->
<svg style="left:1227px;top:1546px" width="35" height="18" viewBox="0 0 35 18"><path d="M2 9 L16 0 L24 4 L27 0 L34 12 L35 26 L1 26 Z" fill="url(#pcg)"/><path d="M24 4 L34 12 L31 22 L24 18 Z" fill="#1fc6f0"/><path d="M1 26 L2 9 L8 12 L8 26 Z" fill="#21d789"/><rect x="10" y="7" width="17" height="14" fill="#0a0a0a"/><text x="11.5" y="17" font-family="Liberation Sans" font-weight="bold" font-size="9.5" fill="#fff">PC</text></svg>
<!-- active app -->
<div class="a" style="left:1281px;top:1542px;width:58px;height:30px;background:#2b2c30;border:1px solid #3a3b40;border-radius:6px 6px 0 0;box-sizing:border-box"></div>
<svg style="left:1296px;top:1551px" width="30" height="14" viewBox="0 0 30 14"><g fill="none" stroke="#154a86" stroke-width="4.5"><path d="M9 3 L3 9 L3 16"/><path d="M13 2.4 L22 3.4 L27 9.5 L27 16"/></g></svg>
<!-- tray -->
<svg style="left:2196px;top:1553px" width="24" height="12" viewBox="0 0 24 12"><path d="M3 12 L12 3 L21 12" stroke="#f0f0f0" stroke-width="2.2" fill="none"/></svg>
<svg style="left:2242px;top:1552px" width="30" height="13" viewBox="0 0 30 13"><ellipse cx="13" cy="12" rx="12" ry="8" fill="#9a9a9e"/><ellipse cx="17" cy="8" rx="8" ry="7" fill="#b0b0b4"/><circle cx="22" cy="13" r="6" fill="#c4261d"/></svg>
<svg style="left:2289px;top:1550px" width="30" height="15" viewBox="0 0 30 15"><g fill="none" stroke="#f2f2f2" stroke-width="2"><path d="M2 14 C5 5 25 5 28 14"/><path d="M7 17 C9 10 21 10 23 17"/></g></svg>
<svg style="left:2326px;top:1550px" width="30" height="15" viewBox="0 0 30 15"><path d="M2 15 V11 H7 L14 4 V15 Z" fill="none" stroke="#f2f2f2" stroke-width="1.8"/><path d="M18 8 C20 10 20 13 19 15 M22 5 C25 8 25 13 23.5 16" stroke="#f2f2f2" stroke-width="1.6" fill="none"/></svg>
<svg style="left:2360px;top:1549px" width="36" height="16" viewBox="0 0 36 16"><rect x="5" y="6" width="24" height="14" rx="3" fill="none" stroke="#f2f2f2" stroke-width="2"/><path d="M8 1 L3 12 H9 L6 20" stroke="#f2f2f2" stroke-width="2.2" fill="none"/></svg>
<div class="t" id="clock" style="left:2452px;top:1542.5px;font-size:19px;color:#f4f4f4;transform-origin:0 0;transform:scaleX(0.9)">19:00</div>
<div class="a" style="left:2510px;top:1553px;width:16px;height:16px;border-radius:50%;background:#b4e2ee"></div>
</body></html>
